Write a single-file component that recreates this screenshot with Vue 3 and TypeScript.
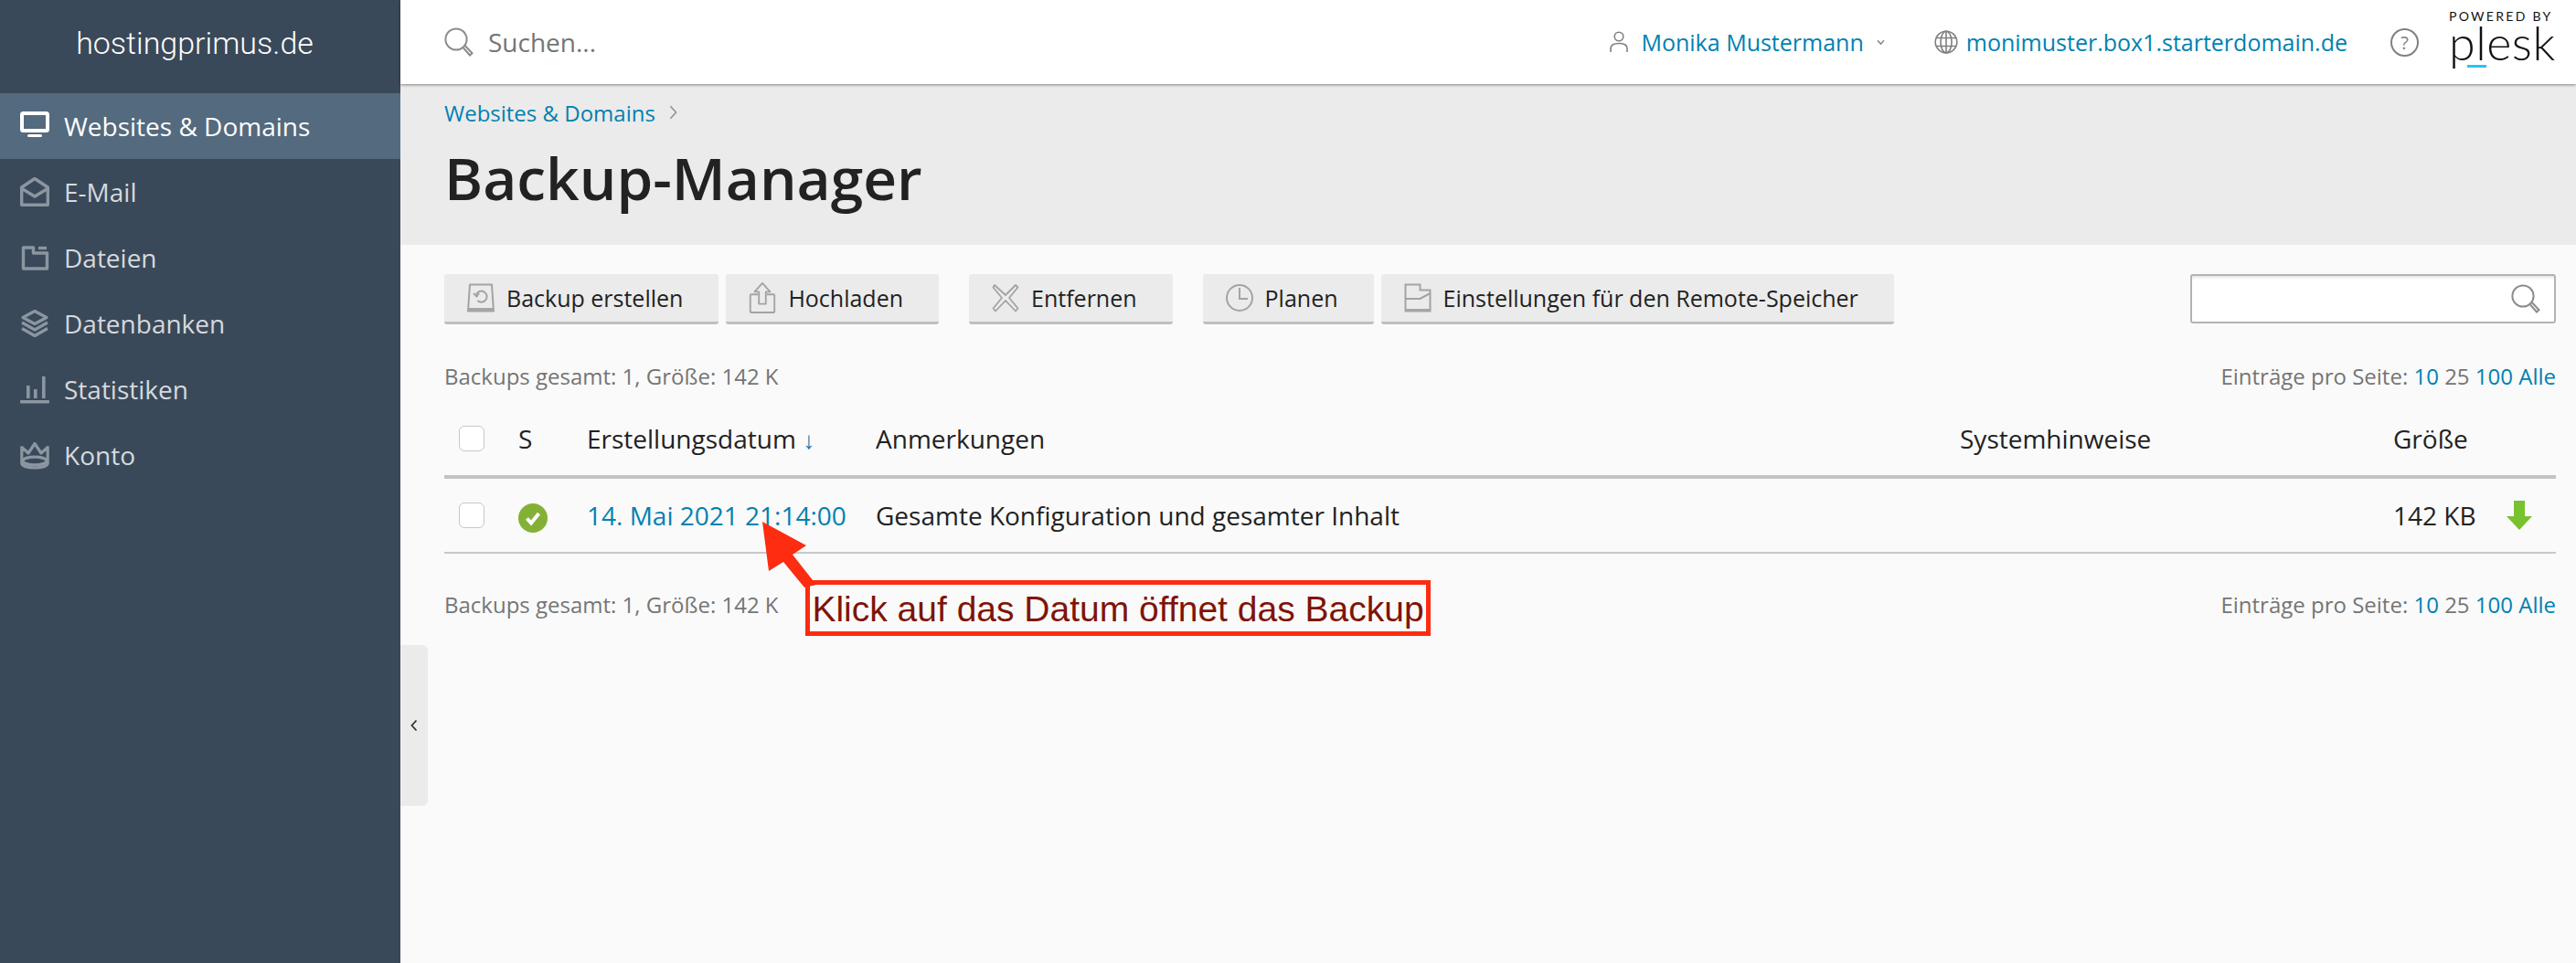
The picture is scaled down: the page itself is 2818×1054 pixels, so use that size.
<script setup lang="ts">
const nav = ['Websites & Domains', 'E-Mail', 'Dateien', 'Datenbanken', 'Statistiken', 'Konto']
</script>

<template>
  <div class="app">
    <aside class="sidebar">
      <div class="brand">hostingprimus.de</div>
      <nav>
        <a v-for="(item, i) in nav" :key="item" class="nav-item" :class="{ active: i === 0 }">
          <svg class="nav-icon" viewBox="0 0 32 32" width="32" height="32">
            <g v-if="i === 0">
              <rect x="2" y="2" width="28" height="19" rx="1.5" fill="none" stroke="currentColor" stroke-width="4" />
              <rect x="8" y="25" width="16" height="3" rx="1.5" fill="currentColor" />
            </g>
            <g v-else-if="i === 1" fill="none" stroke="currentColor" stroke-width="3.4" stroke-linejoin="round">
              <path d="M1.7 11 16 1.5 30.300 11v19.300H1.700z" />
              <path d="M2 12.500 16 21l14-8.500" />
            </g>
            <g v-else-if="i === 2" fill="none" stroke="currentColor" stroke-width="3.4" stroke-linejoin="round">
              <path d="M3.500 5h11v6h15v17h-26z" />
              <path d="M20 5.500h9" />
            </g>
            <g v-else-if="i === 3" fill="none" stroke="currentColor" stroke-width="3.2" stroke-linejoin="round">
              <path d="M16 2.500 29 9.500 16 16.500 3 9.500z" />
              <path d="M2 15 16 23l14-8" />
              <path d="M2 21.500 16 29.500l14-8" />
            </g>
            <g v-else-if="i === 4" fill="currentColor">
              <rect x="7" y="12" width="3.600" height="14" />
              <rect x="15" y="16" width="3.600" height="10" />
              <rect x="24" y="2" width="3.600" height="24" />
              <rect x="0" y="28" width="32" height="3.400" rx="1" />
            </g>
            <g v-else fill="none" stroke="currentColor" stroke-width="3.200" stroke-linejoin="round">
              <path d="M1.800 7.500 9 14l7-10.500L23 14l7.200-6.500V25c0 3-6.400 5-14.200 5S1.800 28 1.800 25z" />
              <ellipse cx="16" cy="22.500" rx="13" ry="4.400" />
            </g>
          </svg>
          <span>{{ item }}</span>
        </a>
      </nav>
    </aside>

    <div class="handle">
      <svg viewBox="0 0 10 16" width="10" height="16">
        <path d="M7.500 2.500 2.500 8l5 5.500" fill="none" stroke="#333" stroke-width="1.800" />
      </svg>
    </div>

    <main class="main">
      <header class="topbar">
        <div class="search-top">
          <svg viewBox="0 0 32 32" width="32" height="32" class="glass">
            <circle cx="13" cy="13" r="11.600" />
            <path d="M21 22.500 28 30.500l2.500-2.200-7.500-8" />
          </svg>
          <span>Suchen...</span>
        </div>
        <a class="user">
          <svg viewBox="0 0 20 24" width="20" height="24" class="thin">
            <circle cx="10" cy="6" r="4.800" />
            <path d="M1 23v-4c0-4 4-5.500 9-5.500s9 1.500 9 5.500v4" />
          </svg>
          <span>Monika Mustermann</span>
          <svg viewBox="0 0 10 8" width="9" height="7" class="thin caret"><path d="M1 1.500 5 6l4-4.500" /></svg>
        </a>
        <a class="domain">
          <svg viewBox="0 0 26 26" width="26" height="26" class="thin">
            <circle cx="13" cy="13" r="11.800" />
            <ellipse cx="13" cy="13" rx="6" ry="11.800" />
            <path d="M2 8.500h22M2 17.500h22M13 1v24" />
          </svg>
          <span>monimuster.box1.starterdomain.de</span>
        </a>
        <span class="help">?</span>
        <div class="plesk">
          <div class="powered">POWERED BY</div>
          <div class="plesk-word">plesk</div>
          <i class="plesk-bar"></i>
        </div>
      </header>

      <section class="title-area">
        <div class="crumb">
          <a>Websites &amp; Domains</a>
          <svg viewBox="0 0 10 18" width="9" height="16"><path d="M1.500 1.500 8.500 9l-7 7.500" fill="none" stroke="#8c8c8c" stroke-width="1.600" /></svg>
        </div>
        <h1>Backup-Manager</h1>
      </section>

      <section class="content">
        <div class="toolbar">
          <button class="btn">
            <svg viewBox="0 0 30 32" width="30" height="32" class="ico">
              <path d="M3 1.500h24L29 30.500H1z" stroke-linejoin="round" />
              <rect x="1.500" y="27" width="27" height="3.500" fill="#a6a6a6" stroke="none" />
              <path d="M10 12.500a6 6 0 1 1 1.500 6.500" />
              <path d="M7 11l3.500 3.500L13 11" />
            </svg>
            Backup erstellen
          </button>
          <button class="btn">
            <svg viewBox="0 0 30 36" width="30" height="34" class="ico">
              <path d="M10 14H2a1 1 0 0 0-1 1v18a2 2 0 0 0 2 2h24a2 2 0 0 0 2-2V15a1 1 0 0 0-1-1h-8" />
              <path d="M11 25V11H6L15 1l9 10h-5v14z" stroke-linejoin="round" />
            </svg>
            Hochladen
          </button>
          <button class="btn group-start">
            <svg viewBox="0 0 30 32" width="30" height="32" class="ico">
              <path d="M3 2 1.500 4.500 11 16 1.500 27.500 4 30.500 15 19l11 11.500 2.500-3L19 16l9.500-11.500L26 2 15 13z" stroke-linejoin="round" stroke-width="1.800" />
            </svg>
            Entfernen
          </button>
          <button class="btn group-start">
            <svg viewBox="0 0 30 32" width="30" height="32" class="ico">
              <circle cx="15" cy="16" r="14" />
              <path d="M15 5v12h9" />
            </svg>
            Planen
          </button>
          <button class="btn">
            <svg viewBox="0 0 30 32" width="30" height="32" class="ico">
              <path d="M1.500 1.500h16v6h11v23h-27z" />
              <path d="M1.500 17h16l11-6" />
              <rect x="1.500" y="28" width="27" height="2.500" fill="#a6a6a6" stroke="none" />
            </svg>
            Einstellungen für den Remote-Speicher
          </button>
          <div class="filter">
            <svg viewBox="0 0 32 32" width="32" height="32" class="glass">
              <circle cx="13" cy="13" r="11.600" />
              <path d="M21 22.500 28 30.500l2.500-2.200-7.500-8" />
            </svg>
          </div>
        </div>

        <div class="info first">
          <span>Backups gesamt: 1, Größe: 142 K</span>
          <span>Einträge pro Seite: <a>10</a> 25 <a>100</a> <a>Alle</a></span>
        </div>

        <div class="grid head">
          <i class="check"></i>
          <span>S</span>
          <span>Erstellungsdatum <a class="sort">↓</a></span>
          <span>Anmerkungen</span>
          <span>Systemhinweise</span>
          <span>Größe</span>
          <span></span>
        </div>
        <div class="grid row">
          <i class="check"></i>
          <svg viewBox="0 0 32 32" width="32" height="32" class="ok">
            <circle cx="16" cy="16" r="16" fill="#84b135" />
            <path d="M9.500 16.500 14 21.500 22.500 11" fill="none" stroke="#fff" stroke-width="4" />
          </svg>
          <a class="date">14. Mai 2021 21:14:00</a>
          <span>Gesamte Konfiguration und gesamter Inhalt</span>
          <span></span>
          <span>142 KB</span>
          <svg viewBox="0 0 28 32" width="28" height="32"><path d="M8 0h12v17h8L14 32 0 17h8z" fill="#79c22f" /></svg>
        </div>

        <div class="info second">
          <span>Backups gesamt: 1, Größe: 142 K</span>
          <span>Einträge pro Seite: <a>10</a> 25 <a>100</a> <a>Alle</a></span>
        </div>
      </section>
    </main>

    <svg class="arrow" viewBox="0 0 2818 1054" width="2818" height="1054">
      <path d="M834 571 882 597 867 607 893 640 880 643 857 615 841 625z" fill="#fe2c10" />
    </svg>
    <div class="note">Klick auf das Datum öffnet das Backup</div>
  </div>
</template>

<style>
html, body { margin: 0; background: #fff; }
</style>

<style scoped>
.app {
  position: relative;
  display: flex;
  width: 2818px;
  height: 1054px;
  overflow: hidden;
  font-family: "Open Sans", sans-serif;
  color: #222;
  font-size: 28px;
}
a { color: #0081b1; }
.sidebar {
  width: 438px;
  flex: none;
  background: #3a4959;
}
.brand {
  height: 102px;
  display: flex;
  align-items: center;
  justify-content: center;
  padding: 0 12px 8px 0;
  box-sizing: border-box;
  color: #fff;
  font-family: Roboto, sans-serif;
  font-weight: 300;
  font-size: 34px;
}
.nav-item {
  height: 72px;
  display: flex;
  align-items: center;
  gap: 16px;
  padding-left: 22px;
  color: #d5d9de;
  font-size: 28px;
}
.nav-item.active { background: #546a7e; color: #fff; }
.nav-icon { color: #8b96a1; flex: none; }
.active .nav-icon { color: #fff; }
.main {
  flex: 1;
  min-width: 0;
  display: flex;
  flex-direction: column;
  background: #fff;
}
.topbar {
  position: relative;
  z-index: 1;
  height: 92px;
  flex: none;
  display: flex;
  align-items: center;
  padding: 0 22px 0 48px;
  background: #fff;
  box-shadow: 0 1px 3px rgba(0, 0, 0, .45);
}
.search-top {
  flex: 1;
  display: flex;
  align-items: center;
  gap: 16px;
  color: #757575;
  font-size: 28px;
}
.glass { fill: none; stroke: #8c8c8c; stroke-width: 2; flex: none; }
.thin { fill: none; stroke: #808080; stroke-width: 1.600; flex: none; }
.user, .domain { display: flex; align-items: center; font-size: 25px; font-weight: 500; }
.user { gap: 14px; }
.caret { margin-left: 0; }
.domain { gap: 9px; margin-left: 54px; }
.help {
  width: 27px;
  height: 27px;
  margin-left: 47px;
  border: 2px solid #808080;
  border-radius: 50%;
  display: flex;
  align-items: center;
  justify-content: center;
  color: #808080;
  font-size: 20px;
}
.plesk {
  position: relative;
  width: 117px;
  height: 92px;
  margin-left: 33px;
  font-family: Lato, sans-serif;
  color: #111;
}
.powered {
  padding-top: 9px;
  font-size: 14px;
  line-height: 18px;
  letter-spacing: 2.300px;
  white-space: nowrap;
}
.plesk-word {
  font-size: 52px;
  font-weight: 300;
  line-height: 38px;
  letter-spacing: .5px;
}
.plesk-bar {
  position: absolute;
  left: 20px;
  top: 71px;
  width: 21px;
  height: 3px;
  background: #28c4ec;
}
.title-area {
  height: 176px;
  flex: none;
  box-sizing: border-box;
  padding: 15px 0 0 48px;
  background: #ebebeb;
}
.crumb {
  display: flex;
  align-items: center;
  gap: 15px;
  height: 32px;
  font-size: 24px;
}
h1 {
  margin: 11px 0 0;
  font-size: 64px;
  line-height: 90px;
  font-weight: 600;
  color: #222;
}
.content {
  flex: 1;
  padding: 32px 22px 0 48px;
  background: #fafafa;
  color: #222;
}
.toolbar { display: flex; align-items: flex-start; height: 55px; gap: 8px; }
.btn {
  height: 55px;
  box-sizing: border-box;
  display: flex;
  align-items: center;
  gap: 13px;
  padding: 0 39px 0 25px;
  border: 0;
  border-bottom: 3px solid #bfbfbf;
  border-radius: 3px;
  background: #ebebeb;
  color: #222;
  font-family: inherit;
  font-size: 25px;
  font-weight: 500;
  white-space: nowrap;
}
.group-start { margin-left: 25px; }
.ico { flex: none; fill: none; stroke: #a3a3a3; stroke-width: 2; }
.filter {
  margin-left: auto;
  width: 400px;
  height: 54px;
  box-sizing: border-box;
  display: flex;
  align-items: center;
  justify-content: flex-end;
  padding-right: 15px;
  background: #fff;
  border: 2px solid #b3b3b3;
  border-radius: 3px;
  box-shadow: inset 0 4px 3px -2px rgba(0, 0, 0, .1);
}
.info {
  display: flex;
  justify-content: space-between;
  height: 34px;
  line-height: 34px;
  color: #757575;
  font-size: 24px;
}
.info.first { margin-top: 40px; }
.info.second { margin-top: 39px; }
.grid {
  display: grid;
  grid-template-columns: 65px 75px 316px 1186px 474px 124px 1fr;
  align-items: center;
  padding-left: 16px;
  font-size: 28px;
}
.head { height: 80px; margin-top: 11px; border-bottom: 4px solid #c2c2c2; }
.row { height: 80px; border-bottom: 2px solid #c8c8c8; }
.check {
  width: 28px;
  height: 28px;
  box-sizing: border-box;
  background: #fff;
  border: 1px solid #c8c8c8;
  border-radius: 6px;
}
.sort { font-size: 26px; }
.ok { margin-top: 5px; }
.handle {
  position: absolute;
  left: 438px;
  top: 706px;
  width: 30px;
  height: 176px;
  display: flex;
  align-items: center;
  justify-content: center;
  background: #ebebeb;
  border-radius: 0 6px 6px 0;
}
.arrow { position: absolute; left: 0; top: 0; pointer-events: none; }
.note {
  position: absolute;
  left: 881px;
  top: 635px;
  width: 684px;
  height: 61px;
  box-sizing: border-box;
  padding-top: 2px;
  border: 5px solid #fe2c10;
  display: flex;
  align-items: center;
  justify-content: center;
  color: #7f1408;
  font-family: "Liberation Sans", sans-serif;
  font-size: 39px;
  white-space: nowrap;
}
</style>
